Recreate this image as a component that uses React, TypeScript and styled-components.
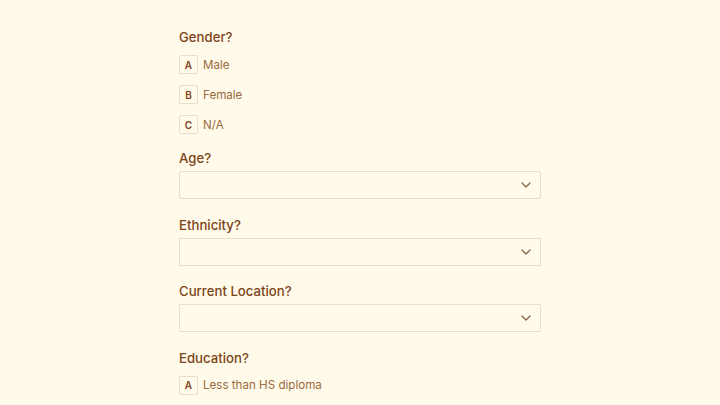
import { FC } from 'react';
import styled, { createGlobalStyle } from 'styled-components';

const colors = {
  background: '#FFFAE9',
  label: '#7C4418',
  text: '#9A6A42',
  border: '#E8DDC7',
  chevron: '#8A6A4A',
};

const GlobalStyle = createGlobalStyle`
  html, body {
    margin: 0;
    padding: 0;
    background-color: ${colors.background};
  }
  body {
    font-family: 'Inter', 'Noto Sans', sans-serif;
  }
`;

const Page = styled.main`
  width: 362px;
  margin: 0 auto;
  padding-top: 27px;
  display: flex;
  flex-direction: column;
`;

const Question = styled.section<{ $gap: number; $after: number }>`
  display: flex;
  flex-direction: column;
  gap: ${({ $gap }) => $gap}px;
  margin-bottom: ${({ $after }) => $after}px;
`;

const Label = styled.h2`
  margin: 0;
  font-size: 13.2px;
  line-height: 20px;
  font-weight: 500;
  color: ${colors.label};
`;

const OptionList = styled.div`
  display: flex;
  flex-direction: column;
  gap: 11px;
`;

const Option = styled.div`
  display: flex;
  align-items: center;
  gap: 5px;
  height: 19px;
`;

const KeyBox = styled.span`
  width: 17px;
  height: 17px;
  border: 1px solid ${colors.border};
  border-radius: 2px;
  display: flex;
  align-items: center;
  justify-content: center;
  font-size: 10px;
  font-weight: 600;
  color: ${colors.label};
  background-color: ${colors.background};
`;

const OptionText = styled.span`
  font-size: 11.6px;
  color: ${colors.text};
`;

const Select = styled.div`
  height: 26px;
  border: 1px solid ${colors.border};
  border-radius: 2px;
  display: flex;
  align-items: center;
  justify-content: flex-end;
  padding-right: 9px;
`;

const Chevron: FC = () => (
  <svg width="10" height="6" viewBox="0 0 10 6" fill="none">
    <path d="M1 1l4 4 4-4" stroke={colors.chevron} strokeWidth="1.4" strokeLinecap="round" strokeLinejoin="round" />
  </svg>
);

type Field =
  | { kind: 'choice'; label: string; options: string[] }
  | { kind: 'select'; label: string };

const fields: Field[] = [
  { kind: 'choice', label: 'Gender?', options: ['Male', 'Female', 'N/A'] },
  { kind: 'select', label: 'Age?' },
  { kind: 'select', label: 'Ethnicity?' },
  { kind: 'select', label: 'Current Location?' },
  { kind: 'choice', label: 'Education?', options: ['Less than HS diploma'] },
];

const keys = 'ABCDEFGH';

export default function App() {
  return (
    <>
      <GlobalStyle />
      <Page>
        {fields.map((field) => (
          <Question
            key={field.label}
            $gap={field.kind === 'choice' ? 8 : 3}
            $after={field.kind === 'choice' ? 14 : 15.5}
          >
            <Label>{field.label}</Label>
            {field.kind === 'choice' ? (
              <OptionList>
                {field.options.map((option, i) => (
                  <Option key={option}>
                    <KeyBox>{keys[i]}</KeyBox>
                    <OptionText>{option}</OptionText>
                  </Option>
                ))}
              </OptionList>
            ) : (
              <Select>
                <Chevron />
              </Select>
            )}
          </Question>
        ))}
      </Page>
    </>
  );
}
